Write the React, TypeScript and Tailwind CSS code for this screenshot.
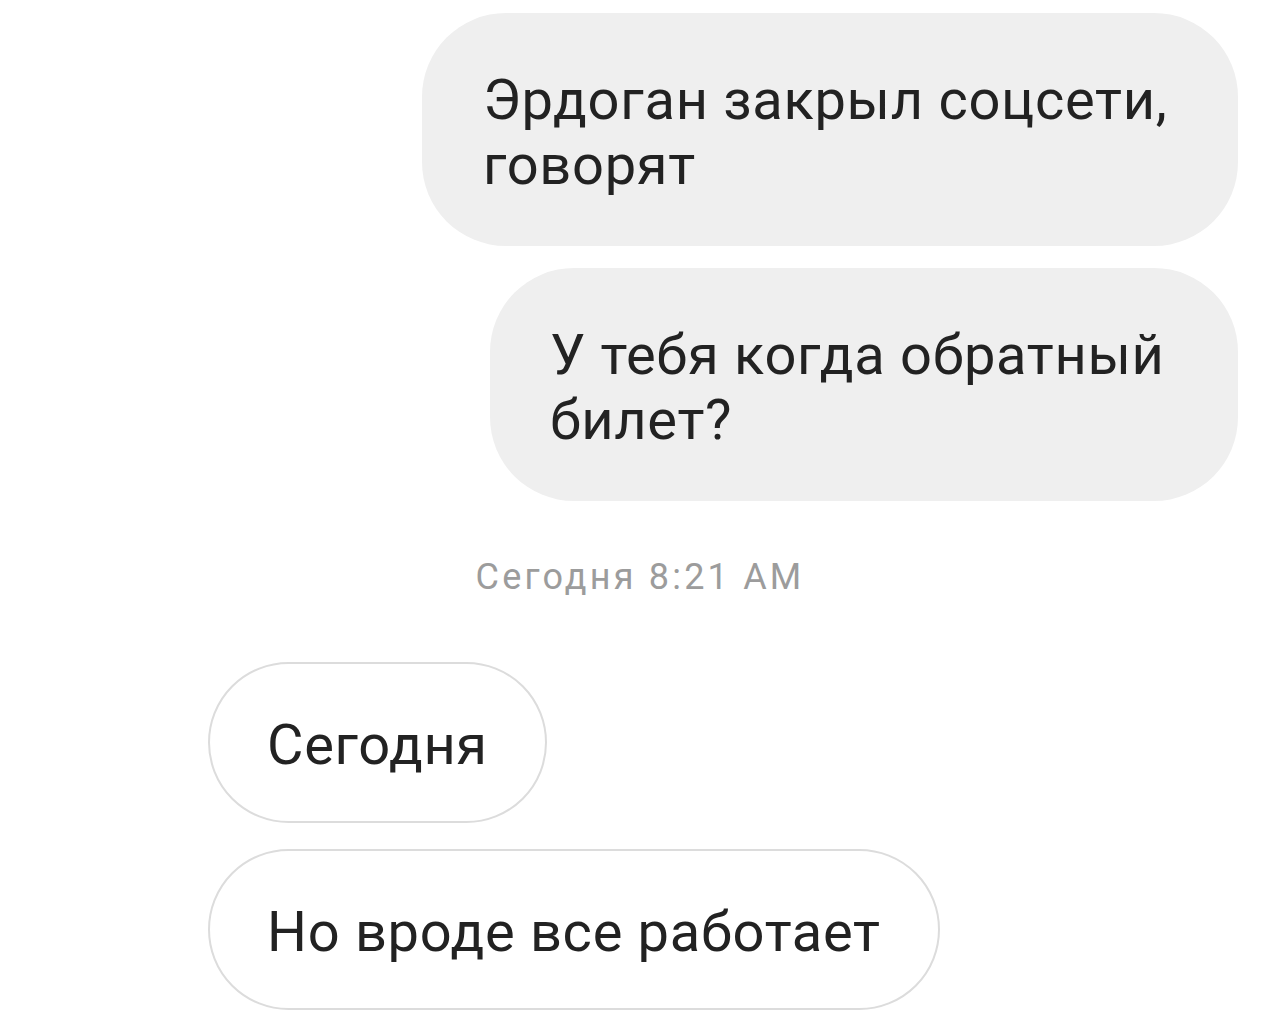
export default function App() {
  const font = { fontFamily: 'Roboto, "Noto Sans", sans-serif' }
  return (
    <div className="min-h-[1028px] w-[1280px] bg-white text-[#222222]" style={font}>
      <div className="flex flex-col pt-[13px]">
        <div className="flex justify-end pr-[42px]">
          <div className="w-[816px] rounded-[84px] bg-[#efefef] pt-[55px] pb-[48px] pl-[61px] text-[56px] leading-[65px] tracking-[0.7px]">
            Эрдоган закрыл соцсети,<br />говорят
          </div>
        </div>
        <div className="mt-[22px] flex justify-end pr-[42px]">
          <div className="w-[748px] rounded-[84px] bg-[#efefef] pt-[55px] pb-[48px] pl-[60px] text-[56px] leading-[65px] tracking-[0.7px]">
            У тебя когда обратный<br />билет?
          </div>
        </div>
        <div className="mt-[56px] text-center text-[36px] leading-[41px] tracking-[3.2px] text-[#9c9c9c]">Сегодня 8:21 AM</div>
        <div className="mt-[64px] flex flex-col items-start gap-[26px] pl-[208px]">
          <div className="rounded-full border-2 border-[#dcdcdc] bg-white px-[57px] pt-[49px] pb-[43px] text-[56px] leading-[65px] tracking-[0.7px]">
            Сегодня
          </div>
          <div className="rounded-full border-2 border-[#dcdcdc] bg-white px-[57px] pt-[49px] pb-[43px] text-[56px] leading-[65px] tracking-[0.7px]">
            Но вроде все работает
          </div>
        </div>
      </div>
    </div>
  )
}
